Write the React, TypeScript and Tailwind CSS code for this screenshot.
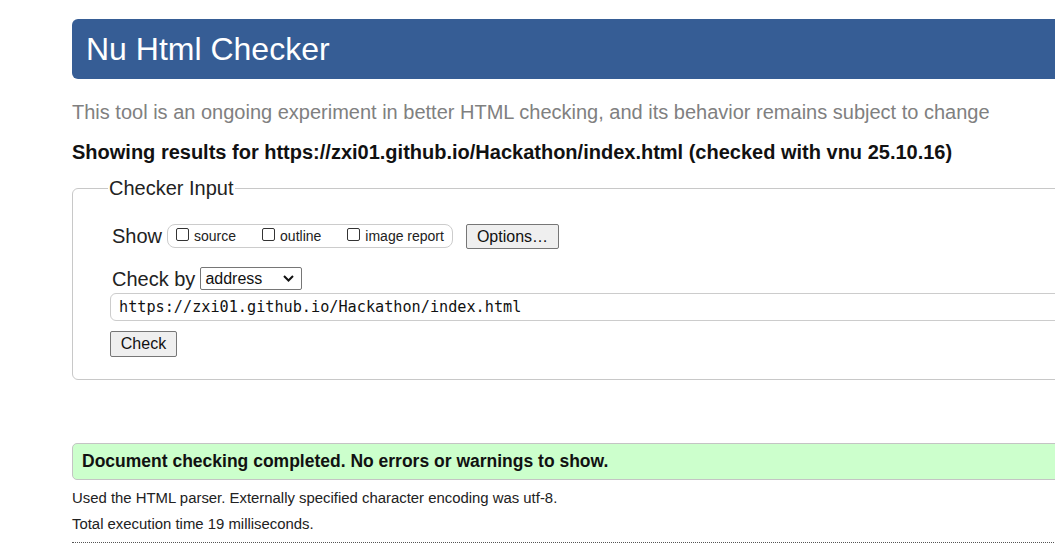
import React from "react";

export default function App() {
  return (
    <div className="w-[1055px] h-[544px] overflow-hidden bg-white" style={{ fontFamily: '"Liberation Sans", Arial, sans-serif' }}>
      <div className="w-[1100px] ml-[72px] pt-[19px]">
        <h1 className="h-[60px] bg-[#365d95] rounded-l-[6px] text-white text-[32px] leading-[60px] pl-[14px]">Nu Html Checker</h1>
        <p className="mt-[21px] text-[20px] leading-[24px] text-[#808080]">This tool is an ongoing experiment in better HTML checking, and its behavior remains subject to change</p>
        <p className="mt-[16px] text-[20px] leading-[24px] font-bold text-[#111]">Showing results for https://zxi01.github.io/Hackathon/index.html (checked with vnu 25.10.16)</p>
        <fieldset className="mt-[12px] border border-[#c8c8c8] rounded-[6px] pl-[38px] pr-0 pb-[22px] min-w-0">
          <legend className="ml-[-3px] px-[1px] text-[20px] leading-[24px] text-[#222]">Checker Input</legend>
          <div className="flex items-center mt-[23px] h-[26px]">
            <span className="text-[20px] text-[#222] mr-[5px] ml-[1px]">Show</span>
            <div className="flex items-center h-[24px] border border-[#ccc] rounded-[8px] pl-[8px] pr-[8px] text-[14px] text-[#222]">
              <label className="flex items-center mr-[26px]"><span className="inline-block w-[13px] h-[13px] border border-[#333] rounded-[2px] mr-[5px] mb-[3px]"></span>source</label>
              <label className="flex items-center mr-[26px]"><span className="inline-block w-[13px] h-[13px] border border-[#333] rounded-[2px] mr-[5px] mb-[3px]"></span>outline</label>
              <label className="flex items-center"><span className="inline-block w-[13px] h-[13px] border border-[#333] rounded-[2px] mr-[5px] mb-[3px]"></span>image report</label>
            </div>
            <button className="ml-[13px] h-[25px] px-[10px] border border-[#767676] rounded-[2px] bg-[#efefef] text-[16px] text-[#111]">Options…</button>
          </div>
          <div className="flex items-center mt-[18px] h-[23px]">
            <span className="text-[20px] text-[#222] mr-[5px] ml-[1px]">Check by</span>
            <div className="flex items-center justify-between w-[102px] h-[23px] border border-[#767676] rounded-[2px] pl-[4px] pr-[7px] text-[16px] text-[#111]">
              <span>address</span>
              <svg width="11" height="7" viewBox="0 0 11 7"><path d="M1 1l4.5 4.5L10 1" fill="none" stroke="#111" strokeWidth="2"/></svg>
            </div>
          </div>
          <div className="mt-[3px] ml-[-1px] h-[28px] border border-[#ccc] rounded-l-[6px] pl-[8px] flex items-center text-[15.2px] text-[#111]" style={{ fontFamily: '"DejaVu Sans Mono", monospace' }}>https://zxi01.github.io/Hackathon/index.html</div>
          <button className="mt-[10px] ml-[-1px] h-[26px] w-[67px] border border-[#767676] rounded-[2px] bg-[#efefef] text-[16px] text-[#111]">Check</button>
        </fieldset>
        <div className="mt-[63px] h-[37px] bg-[#ccffcc] border border-[#c4c4c4] rounded-[5px] pl-[9px] flex items-center text-[17.5px] font-bold text-[#111]">Document checking completed. No errors or warnings to show.</div>
        <p className="mt-[8px] text-[14.9px] leading-[20px] text-[#222]">Used the HTML parser. Externally specified character encoding was utf-8.</p>
        <p className="mt-[6px] text-[14.9px] leading-[20px] text-[#222]">Total execution time 19 milliseconds.</p>
        <div className="mt-[8px] border-t border-dotted border-[#555]"></div>
      </div>
    </div>
  );
}
